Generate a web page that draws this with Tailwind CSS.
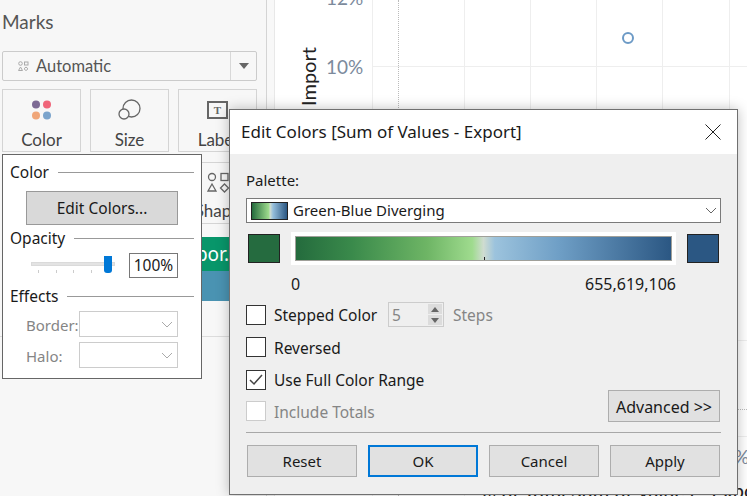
<!DOCTYPE html>
<html lang="en">

<head>
  <meta charset="UTF-8" />
  <title>Edit Colors</title>
  <script src="https://cdn.jsdelivr.net/npm/@tailwindcss/browser@4"></script>
</head>

<body class="bg-white overflow-hidden font-['Noto_Sans','Open_Sans',sans-serif] text-[15.5px] text-[#1a1a1a]">
  <div class="relative w-[747px] h-[496px] overflow-hidden flex">

    <!-- Left shelf -->
    <aside class="relative w-[267px] h-full bg-[#f7f7f7] border-r border-[#d4d4d4] px-[2px] shrink-0 font-['Lato']">
      <h2 class="text-[19px] text-[#555] pt-[9px] leading-[26px]">Marks</h2>
      <div class="mt-[16px] h-[30px] w-[255px] border border-[#cbcbcb] rounded-[2px] flex items-center">
        <div class="flex-1 flex items-center pl-[15px] gap-[7px] text-[#555] text-[16.500px]">
          <svg width="11" height="10" viewBox="0 0 11 10" fill="none" stroke="#aaa" stroke-width="1"><circle cx="2.500" cy="2.500" r="1.800"/><rect x="6.500" y="1" width="3.500" height="3"/><path d="M2.500 6 L4.500 9.500 H.5 Z"/><path d="M8 6 L10 7.800 L8 9.600 L6 7.800 Z"/></svg>
          <span>Automatic</span>
        </div>
        <div class="w-[26px] h-full border-l border-[#d8d8d8] flex items-center justify-center">
          <div class="w-0 h-0 border-x-[5px] border-x-transparent border-t-[6px] border-t-[#666]"></div>
        </div>
      </div>
      <div class="mt-[8px] flex gap-[9px] text-[17px] text-[#444]">
        <div class="w-[79px] h-[63px] border border-[#d4d4d4] flex flex-col items-center">
          <svg class="mt-[10px]" width="22" height="21" viewBox="0 0 22 21"><circle cx="5" cy="4.500" r="4" fill="#7d6a94"/><circle cx="16" cy="4.500" r="4" fill="#f0667a"/><circle cx="5" cy="15.500" r="4" fill="#f0a679"/><circle cx="16" cy="15.500" r="4" fill="#7ba4cc"/></svg>
          <span class="mt-[9px] leading-[20px]">Color</span>
        </div>
        <div class="w-[79px] h-[63px] border border-[#d4d4d4] flex flex-col items-center">
          <svg class="mt-[9px]" width="23" height="21" viewBox="0 0 23 21" fill="none" stroke="#666" stroke-width="1.300"><circle cx="13.500" cy="9.500" r="8.500"/><circle cx="6" cy="15" r="5" fill="#f7f7f7"/></svg>
          <span class="mt-[10px] leading-[20px]">Size</span>
        </div>
        <div class="w-[79px] h-[63px] border border-[#d4d4d4] flex flex-col items-center">
          <div class="mt-[11px] w-[21px] h-[18px] border-2 border-[#666] flex items-center justify-center text-[11px] font-bold font-['Liberation_Serif'] text-[#666]">T</div>
          <span class="mt-[11px] leading-[20px]">Label</span>
        </div>
      </div>
      <!-- Rows partly hidden behind the popups -->
      <div class="ml-[176px] mt-[10px] w-[79px] h-[62px] border-y border-[#d4d4d4] flex flex-col items-center text-[17px] text-[#444]">
        <svg class="mt-[9px]" width="24" height="21" viewBox="0 0 24 21" fill="none" stroke="#666" stroke-width="1.300"><circle cx="6" cy="5" r="3.500"/><rect x="15" y="1.500" width="7" height="7"/><path d="M6 12 L10 19 H2 Z"/><path d="M18.500 12 L22.500 16 L18.500 20 L14.500 16 Z"/></svg>
        <span class="mt-[8px] leading-[20px]">Shape</span>
      </div>
      <div class="ml-[176px] mt-[13px] h-[34px] w-[88px] bg-[#08966a] text-white text-[19px] font-['Noto_Sans'] flex items-center justify-end pr-[37px] whitespace-nowrap">Impor.</div>
      <div class="ml-[176px] h-[30px] w-[88px] bg-[#4a93b2]"></div>
      <div class="absolute left-0 top-[336px] w-full h-px bg-[#dcdcdc]"></div>
    </aside>
    <div class="w-[8px] h-full bg-[#f8f8f8] border-r border-[#e8e8e8] shrink-0"></div>

    <!-- Chart behind the dialog -->
    <main class="relative flex-1 h-full font-['Lato']">
      <div class="absolute left-[23px] top-[48px] h-[58px] [writing-mode:vertical-rl] rotate-180 text-[#222] text-[20px] leading-[20px]">Import</div>
      <div class="absolute left-[51px] top-[-16px] text-[#7c8a9c] text-[19px]">12%</div>
      <div class="absolute left-[51px] top-[53px] text-[#7c8a9c] text-[19px]">10%</div>
      <div class="absolute left-[97px] top-0 w-px h-full bg-[#eeeeee]"></div>
      <div class="absolute left-[123px] top-0 h-full border-l border-dotted border-[#bbb]"></div>
      <div class="absolute left-[189px] top-0 w-px h-full bg-[#eeeeee]"></div>
      <div class="absolute left-[255px] top-0 w-px h-full bg-[#eeeeee]"></div>
      <div class="absolute left-[321px] top-0 w-px h-full bg-[#eeeeee]"></div>
      <div class="absolute left-[387px] top-0 w-px h-full bg-[#eeeeee]"></div>
      <div class="absolute left-[454px] top-0 w-px h-full bg-[#eeeeee]"></div>
      <div class="absolute left-[97px] top-[66px] w-[375px] h-px bg-[#eeeeee]"></div>
      <div class="absolute left-[97px] top-[340px] w-[375px] h-px bg-[#eeeeee]"></div>
      <div class="absolute left-[97px] top-[409px] w-[375px] border-t border-dotted border-[#bbb]"></div>
      <div class="absolute left-[97px] top-[436px] w-[375px] h-px bg-[#eeeeee]"></div>
      <div class="absolute left-[347px] top-[32px] w-[12px] h-[12px] rounded-full border-2 border-[#6c9ac6]"></div>
      <div class="absolute left-[459px] top-[443px] text-[#7c8a9c] text-[19px]">%</div>
      <div class="absolute left-[205px] top-[475px] whitespace-nowrap text-[#222] text-[20px]">% of Total Sum of Values - Export</div>
    </main>

    <!-- Color popup -->
    <section class="absolute left-[2px] top-[154px] w-[200px] h-[225px] bg-white border border-[#666] px-[7px]">
      <div class="flex items-center gap-[9px] h-[18px] mt-[8px]"><span class="translate-y-px">Color</span><div class="flex-1 h-px bg-[#999]"></div></div>
      <button class="block ml-[16px] mt-[10px] w-[152px] h-[34px] bg-[#d9d9d9] border border-[#999] pt-[2px]">Edit Colors...</button>
      <div class="flex items-center gap-[9px] h-[18px] mt-[4px]"><span class="translate-y-px">Opacity</span><div class="flex-1 h-px bg-[#999]"></div></div>
      <div class="flex items-start mt-[6px]">
        <div class="relative ml-[21px] w-[84px] h-[24px]">
          <div class="absolute left-0 top-[9px] w-[84px] h-[4px] bg-[#e3e3e3] border border-[#dadada]"></div>
          <div class="absolute left-[73px] top-[3px] w-[8px] h-[17px] bg-[#0078d7] rounded-b-[3px]"></div>
          <div class="absolute left-[7px] top-[17px] w-px h-[3px] bg-[#ccc]"></div>
          <div class="absolute left-[25px] top-[17px] w-px h-[3px] bg-[#ccc]"></div>
          <div class="absolute left-[42px] top-[17px] w-px h-[3px] bg-[#ccc]"></div>
          <div class="absolute left-[60px] top-[17px] w-px h-[3px] bg-[#ccc]"></div>
        </div>
        <div class="ml-[14px] w-[49px] h-[25px] border border-[#777] flex items-center justify-center">100%</div>
      </div>
      <div class="flex items-center gap-[9px] h-[18px] mt-[9px]"><span class="translate-y-px">Effects</span><div class="flex-1 h-px bg-[#999]"></div></div>
      <div class="flex items-center mt-[6px] ml-[16px] text-[#858585]">
        <span class="w-[53px] text-[15px] translate-y-px">Border:</span>
        <div class="w-[99px] h-[26px] border border-[#ccc] flex items-center justify-end pr-[4px]">
          <svg width="12" height="7" viewBox="0 0 12 7" fill="none" stroke="#aaa"><path d="M1 1 L6 6 L11 1"/></svg>
        </div>
      </div>
      <div class="flex items-center mt-[5px] ml-[16px] text-[#858585]">
        <span class="w-[53px] text-[15px] translate-y-px">Halo:</span>
        <div class="w-[99px] h-[26px] border border-[#ccc] flex items-center justify-end pr-[4px]">
          <svg width="12" height="7" viewBox="0 0 12 7" fill="none" stroke="#aaa"><path d="M1 1 L6 6 L11 1"/></svg>
        </div>
      </div>
    </section>

    <!-- Edit Colors dialog -->
    <section class="absolute left-[229px] top-[109px] w-[509px] h-[386px] bg-[#efefef] border border-[#707070] shadow-[0_0_12px_rgba(0,0,0,0.25)]">
      <header class="h-[44px] bg-white flex items-center justify-between pl-[11px] pr-[16px]">
        <span class="text-[17px] leading-[20px]">Edit Colors [Sum of Values - Export]</span>
        <svg width="16" height="16" viewBox="0 0 16 16" fill="none" stroke="#222" stroke-width="1"><path d="M.5 .5 L15.500 15.500 M15.500 .5 L.5 15.500"/></svg>
      </header>
      <div class="px-[16px]">
        <div class="mt-[16px] leading-[20px] text-[15px]">Palette:</div>
        <div class="mt-[8px] h-[25px] w-[475px] bg-white border border-[#7a7a7a] flex items-center pl-[4px] pr-[3px]">
          <div class="w-[37px] h-[18px] border border-[#222] bg-[linear-gradient(90deg,#246b3d,#9fdb8e_48%,#cfdcd0_52%,#95bedb_60%,#2b5783)]"></div>
          <span class="ml-[5px] flex-1 text-[15px]">Green-Blue Diverging</span>
          <svg width="12" height="7" viewBox="0 0 12 7" fill="none" stroke="#666"><path d="M1 1 L6 6 L11 1"/></svg>
        </div>
        <div class="mt-[9px] flex items-center">
          <div class="ml-[2px] w-[32px] h-[29px] bg-[#256b3f] border border-[#222]"></div>
          <div class="ml-[11px] w-[385px] h-[33px] bg-white p-[4px]">
            <div class="relative w-full h-full border border-[#a0a09a] bg-[linear-gradient(90deg,#246b3d_0%,#3a8a4b_15%,#6eb565_35%,#9fdb8e_47%,#cfdcd0_50%,#9cc3dd_53%,#6f9fc6_70%,#2b5783_100%)]">
              <div class="absolute left-[188px] bottom-0 w-px h-[3px] bg-[#222]"></div>
            </div>
          </div>
          <div class="ml-[11px] w-[32px] h-[29px] bg-[#2b5783] border border-[#222]"></div>
        </div>
        <div class="mt-[9px] w-[430px] pl-[45px] flex justify-between leading-[20px] text-[16px]"><span>0</span><span>655,619,106</span></div>

        <div class="mt-[8px] flex items-center h-[25px]">
          <div class="w-[20px] h-[20px] bg-white border border-[#333]"></div>
          <span class="ml-[8px] w-[114px] whitespace-nowrap translate-y-px">Stepped Color</span>
          <div class="w-[56px] h-[25px] border border-[#ccc] flex items-center justify-between text-[#858585] pl-[3px] pr-[1px]">
            <span class="translate-y-px">5</span>
            <div class="w-[14px] flex flex-col gap-[1px]">
              <div class="h-[10px] bg-[#dcdcdc] flex items-center justify-center"><div class="w-0 h-0 border-x-[4px] border-x-transparent border-b-[5px] border-b-[#666]"></div></div>
              <div class="h-[10px] bg-[#dcdcdc] flex items-center justify-center"><div class="w-0 h-0 border-x-[4px] border-x-transparent border-t-[5px] border-t-[#666]"></div></div>
            </div>
          </div>
          <span class="ml-[9px] text-[#858585] translate-y-px">Steps</span>
        </div>
        <div class="mt-[10px] flex items-center h-[20px]">
          <div class="w-[20px] h-[20px] bg-white border border-[#333]"></div>
          <span class="ml-[8px] translate-y-[2px]">Reversed</span>
        </div>
        <div class="mt-[13px] flex items-center h-[20px]">
          <div class="w-[20px] h-[20px] bg-white border border-[#333] flex items-center justify-center">
            <svg width="14" height="12" viewBox="0 0 14 12" fill="none" stroke="#444" stroke-width="1.500"><path d="M1 6 L5 10 L13 1"/></svg>
          </div>
          <span class="ml-[8px] translate-y-px">Use Full Color Range</span>
        </div>
        <div class="mt-[11px] flex items-center h-[20px] relative">
          <div class="w-[20px] h-[20px] bg-white border border-[#ccc]"></div>
          <span class="ml-[8px] text-[#858585] translate-y-[2px]">Include Totals</span>
          <button class="absolute left-[362px] top-[-11px] w-[112px] h-[32px] bg-[#e1e1e1] border border-[#adadad] text-[16px] pt-[2px]">Advanced &gt;&gt;</button>
        </div>
        <div class="mt-[11px] w-[475px] h-px bg-[#a8a8a8]"></div>
        <div class="mt-[12px] flex justify-between w-[474px] pl-[1px] text-[15px]">
          <button class="w-[110px] h-[32px] bg-[#e1e1e1] border border-[#adadad]">Reset</button>
          <button class="w-[110px] h-[32px] bg-[#e1e1e1] border-2 border-[#0078d7]">OK</button>
          <button class="w-[110px] h-[32px] bg-[#e1e1e1] border border-[#adadad]">Cancel</button>
          <button class="w-[110px] h-[32px] bg-[#e1e1e1] border border-[#adadad]">Apply</button>
        </div>
      </div>
    </section>
  </div>
</body>

</html>
